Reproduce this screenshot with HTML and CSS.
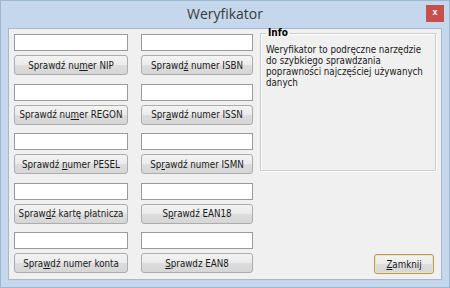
FILE: index.html
```html
<!DOCTYPE html>
<html>
<head>
    <title>Weryfikator</title>
    <link rel="stylesheet" href="styles.css">
</head>
<body>
    <div class="window">
        <div class="titlebar">
            <span class="title">Weryfikator</span>
            <span class="close">x</span>
        </div>

        <div class="client">
            <div class="column col-left">
                <div class="check">
                    <input type="text" class="field">
                    <button class="btn">Sprawdź nu<u>m</u>er NIP</button>
                </div>
                <div class="check">
                    <input type="text" class="field">
                    <button class="btn">Sprawdź nu<u>m</u>er REGON</button>
                </div>
                <div class="check">
                    <input type="text" class="field">
                    <button class="btn">Sprawdź <u>n</u>umer PESEL</button>
                </div>
                <div class="check">
                    <input type="text" class="field">
                    <button class="btn">Spraw<u>d</u>ź kartę płatnicza</button>
                </div>
                <div class="check">
                    <input type="text" class="field">
                    <button class="btn">Spra<u>w</u>dź numer konta</button>
                </div>
            </div>

            <div class="column col-right">
                <div class="check">
                    <input type="text" class="field">
                    <button class="btn">Sprawd<u>ź</u> numer ISBN</button>
                </div>
                <div class="check">
                    <input type="text" class="field">
                    <button class="btn">Spr<u>a</u>wdź numer ISSN</button>
                </div>
                <div class="check">
                    <input type="text" class="field">
                    <button class="btn">Sp<u>r</u>awdź numer ISMN</button>
                </div>
                <div class="check">
                    <input type="text" class="field">
                    <button class="btn">S<u>p</u>rawdź EAN18</button>
                </div>
                <div class="check">
                    <input type="text" class="field">
                    <button class="btn"><u>S</u>prawdz EAN8</button>
                </div>
            </div>

            <div class="side">
                <fieldset class="info">
                    <legend>Info</legend>
                    <p>Weryfikator to podręczne narzędzie do szybkiego sprawdzania poprawności najczęściej używanych danych</p>
                </fieldset>
                <button class="btn btn-close"><u>Z</u>amknij</button>
            </div>
        </div>
    </div>
</body>
</html>
```

FILE: styles.css
```css
body {
    margin: 0;
    font-family: "DejaVu Sans Condensed", "DejaVu Sans", sans-serif;
    font-size: 9.7px;
    color: #1a1a1a;
}

.window {
    position: relative;
    width: 450px;
    height: 288px;
    box-sizing: border-box;
    padding: 0 7px 7px 7px;
    background-color: #c4d7ec;
    border: 1px solid #9fb6d0;
}

.titlebar {
    height: 27px;
    line-height: 25px;
    text-align: center;
}

.title {
    font-family: "Open Sans", "Noto Sans", sans-serif;
    font-size: 14px;
    color: #3a3a3a;
}

.close {
    position: absolute;
    top: 4px;
    right: 5px;
    width: 18px;
    height: 17px;
    line-height: 15px;
    background-color: #c8504c;
    color: #fff;
    font-family: "Liberation Sans", sans-serif;
    font-size: 9px;
    font-weight: bold;
    text-align: center;
}

.client {
    display: flex;
    height: 252px;
    box-sizing: border-box;
    padding: 5px;
    background-color: #f0f0f0;
    border: 1px solid #a7b8cc;
}

.column {
    display: flex;
    flex-direction: column;
}

.col-left {
    width: 114px;
}

.col-right {
    width: 112px;
    margin-left: 13px;
}

.check {
    display: flex;
    flex-direction: column;
    margin-bottom: 8.5px;
}

.field {
    height: 17px;
    margin: 0 0 4px 0;
    padding: 0;
    box-sizing: border-box;
    border: 1px solid #9a9a9a;
    background-color: #fff;
}

.btn {
    height: 20px;
    padding: 0;
    box-sizing: border-box;
    border: 1px solid #acacac;
    border-radius: 3px;
    background: linear-gradient(#f3f3f3, #ebebeb 50%, #dddddd 50%, #d6d6d6);
    font-family: inherit;
    font-size: 9.7px;
    color: #1a1a1a;
    white-space: nowrap;
}

.side {
    display: flex;
    flex-direction: column;
    width: 176px;
    margin-left: 7px;
    margin-top: -5px;
}

.info {
    height: 142px;
    margin: 0;
    padding: 0 5px;
    box-sizing: border-box;
    border: 1px solid #c9ccd0;
    box-shadow: inset 1px 1px 0 #fff, 1px 1px 0 #fff;
}

.info legend {
    padding: 0 2px;
    line-height: 8px;
    font-size: 10px;
    font-weight: bold;
    color: #000;
}

.info p {
    max-width: 158px;
    margin: 7px 0 0 0;
    line-height: 11px;
}

.btn-close {
    align-self: flex-end;
    width: 60px;
    margin-top: auto;
    margin-right: 2px;
    border-color: #b39a5a;
    box-shadow: inset 0 0 0 1px #f4e4b0;
}
```
